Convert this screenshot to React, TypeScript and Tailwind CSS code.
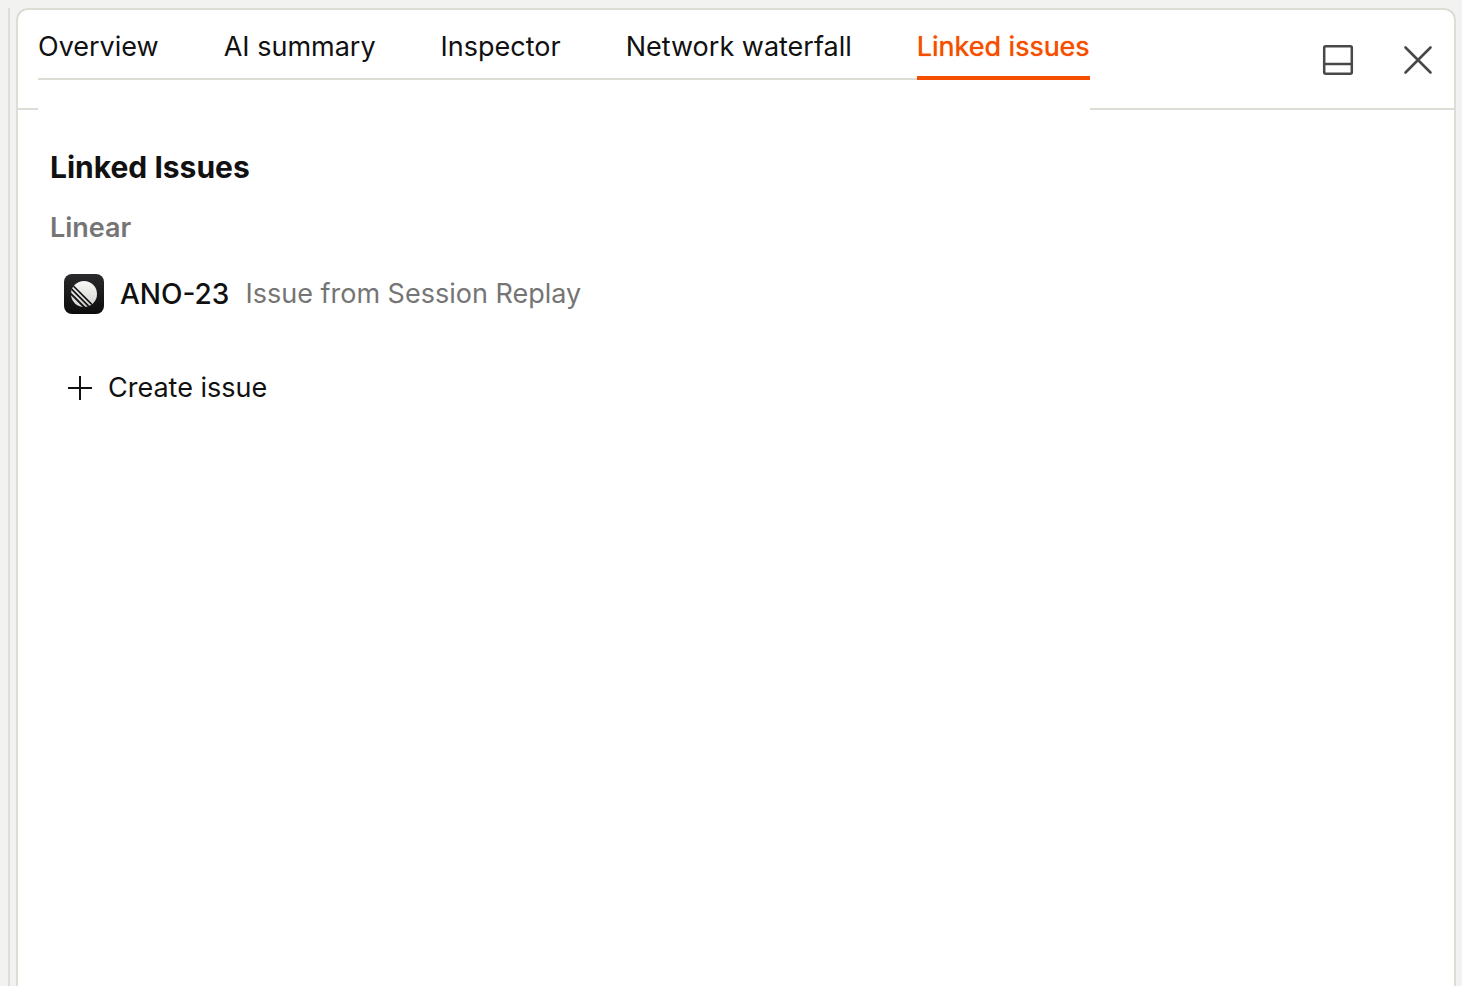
import { useState } from 'react'
import clsx from 'clsx'

const TABS = ['Overview', 'AI summary', 'Inspector', 'Network waterfall', 'Linked issues']

interface LinkedIssue {
  id: string
  title: string
}

const LINEAR_ISSUES: LinkedIssue[] = [
  { id: 'ANO-23', title: 'Issue from Session Replay' },
]

const LinearLogo = () => (
  <svg viewBox="0 0 40 40" className="size-10 shrink-0" aria-hidden="true">
    <defs>
      <linearGradient id="linear-bg" x1="0" y1="0" x2="0" y2="1">
        <stop offset="0" stopColor="#2a2a2c" />
        <stop offset="1" stopColor="#0c0c0d" />
      </linearGradient>
      <linearGradient id="linear-ball" x1="0" y1="0" x2="0" y2="1">
        <stop offset="0" stopColor="#f8f8f6" />
        <stop offset="1" stopColor="#d4d4d0" />
      </linearGradient>
      <clipPath id="linear-clip">
        <circle cx="20" cy="20" r="13.2" />
      </clipPath>
    </defs>
    <rect width="40" height="40" rx="8" fill="url(#linear-bg)" />
    <circle cx="20" cy="20" r="13" fill="url(#linear-ball)" />
    <g clipPath="url(#linear-clip)" stroke="#151516">
      <path d="M5 7.6 35 37.6" strokeWidth="1.7" />
      <path d="M5 12.6 30 37.6" strokeWidth="1.8" />
      <path d="M5 17.8 30 42.8" strokeWidth="2" />
    </g>
  </svg>
)

const PanelBottomIcon = () => (
  <svg viewBox="0 0 40 40" className="size-10" fill="none" stroke="currentColor" strokeWidth="2.5" aria-hidden="true">
    <rect x="6.2" y="6.2" width="27.6" height="27.6" rx="1.5" />
    <path d="M6 24H34" />
  </svg>
)

const CloseIcon = () => (
  <svg viewBox="0 0 40 40" className="size-10" fill="none" stroke="currentColor" strokeWidth="2.6" strokeLinecap="round" aria-hidden="true">
    <path d="M7.5 7.5 32.5 32.5M32.5 7.5 7.5 32.5" />
  </svg>
)

const PlusIcon = () => (
  <svg viewBox="0 0 24 24" className="size-6" fill="none" stroke="currentColor" strokeWidth="2" aria-hidden="true">
    <path d="M12 0V24M0 12H24" />
  </svg>
)

export default function App() {
  const [activeTab, setActiveTab] = useState('Linked issues')

  return (
    <div className="flex min-h-screen gap-1.5 bg-[#f2f2f0] pt-2 pr-1.5 pl-2 font-[Inter,sans-serif] text-[27px] leading-10 text-[#111]">
      <div className="w-0.5 shrink-0 bg-[#dcddd5]" />

      <main className="min-w-0 flex-1 rounded-t-xl border-2 border-b-0 border-[#dcddd5] bg-white">
        <header className="flex items-start justify-between border-b-2 border-[#dcddd5] pr-4 pl-5">
          <div className="-mb-0.5 bg-white pb-[30px]">
            <div role="tablist" className="flex gap-[65px] shadow-[inset_0_-2px_0_#dcddd5]">
              {TABS.map((tab) => (
                <button
                  key={tab}
                  type="button"
                  role="tab"
                  aria-selected={tab === activeTab}
                  onClick={() => setActiveTab(tab)}
                  className={clsx(
                    'cursor-pointer border-b-4 pt-[17px] pb-[9px] whitespace-nowrap',
                    tab === activeTab
                      ? 'border-[#f54e00] text-[#f54e00] [text-shadow:0_0_1px_currentColor]'
                      : 'border-transparent',
                  )}
                >
                  {tab}
                </button>
              ))}
            </div>
          </div>

          <div className="flex gap-10 pt-[30px] text-[#484848]">
            <button type="button" aria-label="Dock to bottom" className="cursor-pointer">
              <PanelBottomIcon />
            </button>
            <button type="button" aria-label="Close" className="cursor-pointer">
              <CloseIcon />
            </button>
          </div>
        </header>

        <section className="px-8 pt-[37px]">
          <h2 className="text-[30px] font-bold">Linked Issues</h2>
          <h3 className="mt-[21px] font-semibold text-[#757575]">Linear</h3>

          <ul className="mt-[26px] px-3.5">
            {LINEAR_ISSUES.map((issue) => (
              <li key={issue.id}>
                <a href={`#${issue.id}`} className="flex items-center gap-4">
                  <LinearLogo />
                  <span className="text-[28px] font-medium">{issue.id}</span>
                  <span className="text-[#757575]">{issue.title}</span>
                </a>
              </li>
            ))}
          </ul>

          <button type="button" className="mt-[54px] ml-[18px] flex cursor-pointer items-center gap-4">
            <PlusIcon />
            Create issue
          </button>
        </section>
      </main>
    </div>
  )
}
